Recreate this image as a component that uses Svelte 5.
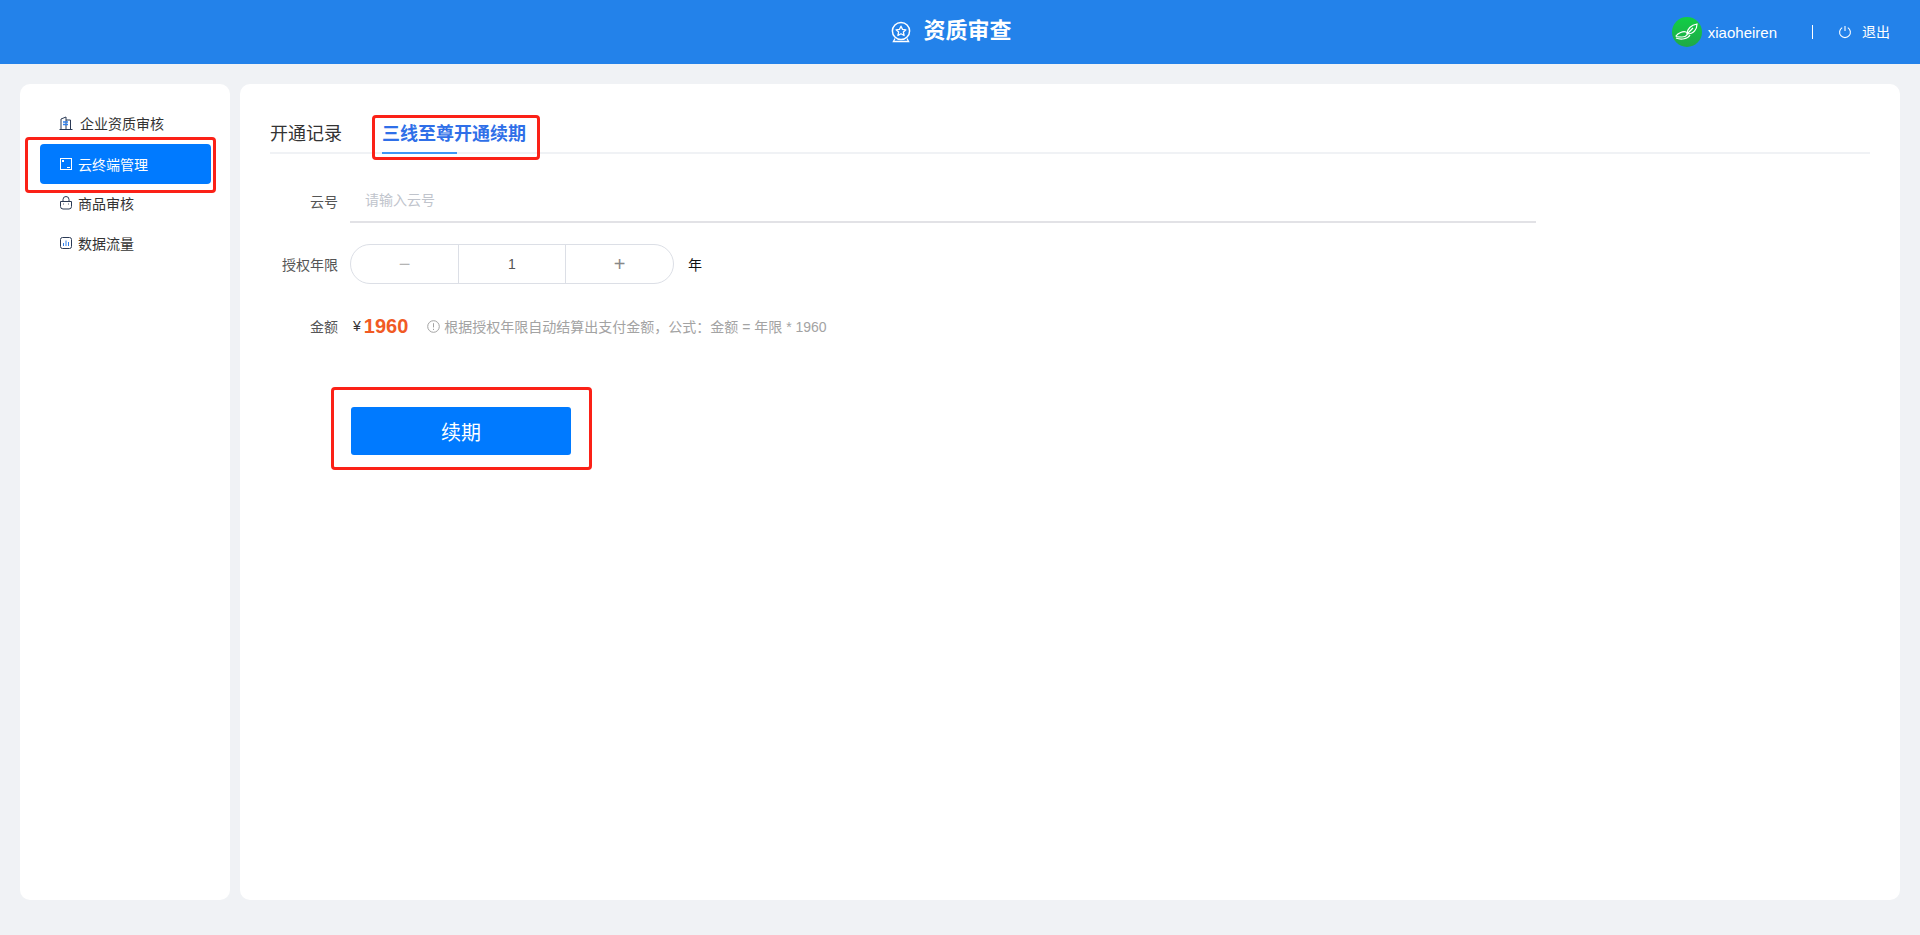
<script>
	let years = $state(1);
	const menu = [
		{ name: '企业资质审核', icon: 'building' },
		{ name: '云终端管理', icon: 'screen', active: true },
		{ name: '商品审核', icon: 'bag' },
		{ name: '数据流量', icon: 'chart' }
	];
</script>

<div class="page">
	<header>
		<div class="title">
			<svg width="22" height="22" viewBox="0 0 22 22" fill="none" stroke="#fff" stroke-width="1.5">
				<circle cx="11" cy="10" r="8.6" />
				<path d="M11 5.2l1.5 3.2 3.4.4-2.5 2.3.7 3.4-3.1-1.7-3.1 1.7.7-3.4-2.5-2.3 3.4-.4z" stroke-width="1.3" stroke-linejoin="round" />
				<path d="M5 17.5l-1.6 3h15.2l-1.6-3" stroke-width="1.3" />
			</svg>
			<span>资质审查</span>
		</div>
		<div class="user">
			<div class="avatar">
				<svg width="30" height="30" viewBox="0 0 30 30" fill="none" stroke="#fff" stroke-width="1.2">
					<path d="M4 19c2-3 7-5 10-4s1 5-4 5-6-.5-6-1z" />
					<path d="M4 21c5 2 12 1 14-3" />
					<path d="M15 17c0-5 4-9 10-10 0 5-3 10-10 10zM16 16l5-5" />
				</svg>
			</div>
			<span class="name">xiaoheiren</span>
			<i class="sep"></i>
			<svg class="power" width="14" height="14" viewBox="0 0 14 14" fill="none" stroke="#fff" stroke-width="1.1">
				<path d="M4.2 2.6a5.4 5.4 0 1 0 5.6 0" />
				<path d="M7 1v5" />
			</svg>
			<span class="logout">退出</span>
		</div>
	</header>

	<div class="body">
		<aside>
			{#each menu as item}
				<div class="menu-item" class:active={item.active}>
					<svg width="14" height="14" viewBox="0 0 14 14" fill="none" stroke={item.active ? '#fff' : '#2b3a55'} stroke-width="1">
						{#if item.icon === 'building'}
							<path d="M0.5 13.5h13M2 13.500V3l5-2v12.500M7 4h4.500v9.500" />
							<path d="M4 6h5M4 8.500h5" stroke="#2f80ed" stroke-width="1.500" />
						{:else if item.icon === 'screen'}
							<rect x="1.500" y="1.500" width="11" height="11" />
							<rect x="3" y="3" width="2" height="2" fill="#fff" stroke="none" />
							<path d="M8 10.500h3" />
						{:else if item.icon === 'bag'}
							<path d="M4 5V3.500a3 3 0 0 1 6 0V5" />
							<path d="M1.500 5.500h11v5a2.500 2.500 0 0 1-2.500 2.500H4a2.500 2.500 0 0 1-2.500-2.500z" />
							<path d="M4.500 8h0M9.500 8h0" stroke-linecap="round" />
						{:else}
							<rect x="1.500" y="1.500" width="11" height="11" rx="2" />
							<path d="M4.500 10V7M7 10V4.500M9.500 10V6" stroke="#2f80ed" />
						{/if}
					</svg>
					<span>{item.name}</span>
				</div>
			{/each}
		</aside>

		<main>
			<div class="tabs">
				<div class="tab">开通记录</div>
				<div class="tab current">三线至尊开通续期</div>
			</div>

			<div class="row first">
				<label for="cloud">云号</label>
				<input id="cloud" placeholder="请输入云号" />
			</div>

			<div class="row second">
				<span class="label">授权年限</span>
				<div class="stepper">
					<button class="step minus" onclick={() => years > 1 && years--}>−</button>
					<div class="value">{years}</div>
					<button class="step" onclick={() => years++}>+</button>
				</div>
				<span class="unit">年</span>
			</div>

			<div class="row third">
				<span class="label">金额</span>
				<span class="yen">¥</span>
				<span class="amount">{years * 1960}</span>
				<svg class="info" width="13" height="13" viewBox="0 0 13 13" fill="none" stroke="#a3a3a3">
					<circle cx="6.500" cy="6.500" r="5.800" />
					<path d="M6.500 3.200v4.200M6.500 8.800v1.200" />
				</svg>
				<span class="hint">根据授权年限自动结算出支付金额，公式：金额 = 年限 * 1960</span>
			</div>

			<button class="submit">续期</button>
		</main>
	</div>

	<!-- red annotations drawn over the screenshot -->
	<div class="mark mark-menu"></div>
	<div class="mark mark-tab"></div>
	<div class="mark mark-btn"></div>
</div>

<style>
	:global(body) {
		margin: 0;
		background: #f0f2f5;
	}

	.page {
		position: relative;
		height: 935px;
		overflow: hidden;
		font-family: "Liberation Sans", "Noto Sans CJK SC", sans-serif;
		color: #333;
	}

	header {
		height: 64px;
		background: #2382ea;
		position: relative;
		display: flex;
		align-items: center;
		justify-content: center;
		color: #fff;
	}

	.title {
		display: flex;
		align-items: center;
		gap: 10px;
		font-size: 22px;
		font-weight: 700;
		margin-right: 18px;
	}

	.title span {
		line-height: 28px;
		margin-top: -2px;
		margin-left: 1px;
	}

	.user {
		position: absolute;
		right: 30px;
		top: 0;
		height: 64px;
		display: flex;
		align-items: center;
		font-size: 14px;
	}

	.avatar {
		width: 30px;
		height: 30px;
		border-radius: 50%;
		background: linear-gradient(#10cf45, #20a848);
	}

	.name {
		margin-left: 6px;
		font-size: 15px;
	}

	.sep {
		width: 1px;
		height: 14px;
		background: #fff;
		margin: 0 25px 0 35px;
	}

	.logout {
		margin-left: 10px;
		margin-top: -2px;
	}

	.body {
		display: flex;
		gap: 10px;
		padding: 20px 20px 0;
	}

	aside {
		width: 210px;
		height: 816px;
		background: #fff;
		border-radius: 10px;
		box-sizing: border-box;
		padding: 19px 20px;
	}

	.menu-item {
		width: 171px;
		height: 40px;
		box-sizing: border-box;
		padding-left: 19px;
		display: flex;
		align-items: center;
		gap: 5px;
		font-size: 14px;
		color: #333;
		border-radius: 4px;
	}

	.menu-item:first-child {
		gap: 7px;
	}

	.menu-item.active {
		background: #007aff;
		color: #fff;
		margin-top: 1px;
		margin-bottom: -1px;
	}

	main {
		flex: 1;
		height: 816px;
		background: #fff;
		border-radius: 10px;
		box-sizing: border-box;
		padding: 30px;
	}

	.tabs {
		display: flex;
		gap: 40px;
		height: 31px;
		padding-top: 7px;
		border-bottom: 2px solid #f0f2f5;
		font-size: 18px;
		line-height: 26px;
		color: #333;
	}

	.tab {
		position: relative;
	}

	.tab.current {
		color: #2f6fe8;
		font-weight: 700;
	}

	.tab.current::after {
		content: "";
		position: absolute;
		left: 0;
		top: 31px;
		width: 75px;
		height: 2px;
		background: #3d97f5;
	}

	.row {
		display: flex;
		align-items: center;
		font-size: 14px;
	}

	.row label,
	.label {
		width: 68px;
		margin-right: 12px;
		text-align: right;
		color: #555;
	}

	.first {
		margin-top: 25px;
		height: 44px;
	}

	input {
		width: 1186px;
		height: 44px;
		box-sizing: border-box;
		border: 0;
		border-bottom: 2px solid #e2e2e6;
		padding: 0 15px;
		font: inherit;
		outline: none;
	}

	input::placeholder {
		color: #c0c4cc;
	}

	.second {
		margin-top: 21px;
	}

	.stepper {
		width: 324px;
		height: 40px;
		box-sizing: border-box;
		border: 1px solid #dcdfe6;
		border-radius: 20px;
		display: flex;
	}

	.step {
		flex: 1;
		border: 0;
		background: none;
		font-size: 20px;
		font-weight: 300;
		color: #888;
		padding: 0;
		font-family: inherit;
	}

	.minus {
		flex: none;
		width: 107px;
		color: #b4b4b4;
	}

	.value {
		width: 108px;
		box-sizing: border-box;
		border-left: 1px solid #dcdfe6;
		border-right: 1px solid #dcdfe6;
		text-align: center;
		line-height: 38px;
		color: #555;
	}

	.unit {
		margin-left: 14px;
		color: #111;
	}

	.third {
		margin-top: 24px;
		height: 36px;
	}

	.yen {
		margin-left: 3px;
		color: #333;
	}

	.amount {
		margin-left: 3px;
		font-size: 20px;
		font-weight: 700;
		color: #f15a24;
	}

	.info {
		margin-left: 19px;
	}

	.hint {
		margin-left: 4px;
		font-size: 14px;
		color: #a3a3a3;
	}

	.submit {
		display: block;
		margin: 63px 0 0 81px;
		width: 220px;
		height: 48px;
		border: 0;
		border-radius: 3px;
		background: #007aff;
		color: #fff;
		font-size: 20px;
		font-family: inherit;
	}

	.mark {
		position: absolute;
		box-sizing: border-box;
		border: 3px solid #fb2117;
		border-radius: 4px;
		pointer-events: none;
	}

	.mark-menu {
		left: 25px;
		top: 137px;
		width: 191px;
		height: 56px;
	}

	.mark-tab {
		left: 372px;
		top: 115px;
		width: 168px;
		height: 45px;
	}

	.mark-btn {
		left: 331px;
		top: 387px;
		width: 261px;
		height: 83px;
	}
</style>
